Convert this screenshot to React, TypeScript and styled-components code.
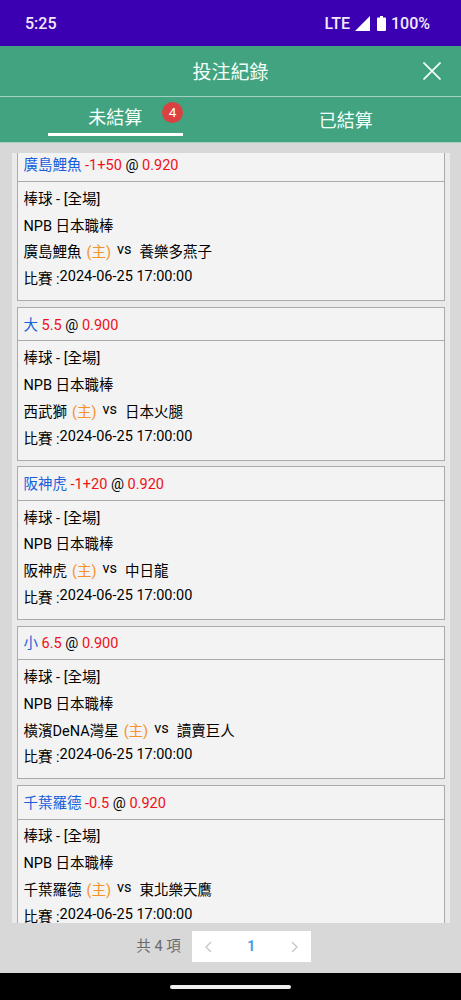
import React from "react";
import styled, { createGlobalStyle } from "styled-components";

const GlobalStyle = createGlobalStyle`
  * { box-sizing: border-box; }
  body {
    margin: 0;
    background: #d8d8d8;
    font-family: Roboto, "Noto Sans CJK TC", sans-serif;
    font-size: 14.5px;
    color: #000;
  }
`;

const Screen = styled.div`
  width: 461px;
  height: 1000px;
  display: flex;
  flex-direction: column;
  overflow: hidden;
  background: #d8d8d8;
`;

const StatusBar = styled.div`
  flex: none;
  height: 46px;
  padding: 1px 31px 0 25px;
  display: flex;
  align-items: center;
  justify-content: space-between;
  background: #3a00b1;
  color: #f3e9ff;
  font-size: 16px;
  font-weight: 500;
`;

const StatusIcons = styled.div`
  display: flex;
  align-items: center;
`;

const SignalIcon = styled.svg`
  margin: 0 7px 0 5px;
`;

const BatteryIcon = styled.svg`
  margin-right: 5px;
`;

const TitleBar = styled.header`
  flex: none;
  height: 51px;
  display: grid;
  grid-template-columns: 60px 1fr 60px;
  align-items: center;
  background: #42a380;
  border-bottom: 1px solid #a3d3c0;
`;

const Title = styled.h1`
  grid-column: 2;
  margin: 0;
  padding-top: 4px;
  text-align: center;
  color: #f4fffa;
  font-size: 19px;
  font-weight: 400;
  line-height: 28px;
`;

const CloseButton = styled.button`
  justify-self: center;
  display: flex;
  padding: 0 0 0 2px;
  border: 0;
  background: none;
`;

const Tabs = styled.nav`
  flex: none;
  height: 46px;
  display: flex;
  background: #42a380;
  border-bottom: 1px solid #a9cfc0;
`;

const Tab = styled.button<{ $active?: boolean }>`
  position: relative;
  flex: 1;
  display: flex;
  justify-content: center;
  padding: ${(p) => (p.$active ? 8 : 11)}px 0 0;
  border: 0;
  background: none;
  color: #f4fffa;
  font: 400 18px/26px Roboto, "Noto Sans CJK TC", sans-serif;
`;

const TabLabel = styled.span<{ $underlined?: boolean }>`
  width: 135px;
  height: 31px;
  text-align: center;
  border-bottom: ${(p) => (p.$underlined ? "3px solid #fff" : "none")};
`;

const Badge = styled.span`
  position: absolute;
  top: 5px;
  left: 162px;
  width: 21px;
  height: 21px;
  border-radius: 50%;
  background: #db4141;
  color: #fff;
  font-size: 13.5px;
  line-height: 21px;
  text-align: center;
`;

const List = styled.main`
  flex: none;
  height: 770px;
  margin: 10px 11px 0 12px;
  padding: 0 5px;
  overflow: hidden;
  background: #eaeaea;
`;

const Stack = styled.div`
  margin-top: -5.4px;
  display: flex;
  flex-direction: column;
  gap: 5.9px;
`;

const Card = styled.article`
  flex: none;
  height: 153.5px;
  border: 1px solid #aaa;
  background: #f3f3f3;
`;

const CardHeader = styled.div`
  height: 33.4px;
  padding: 1.6px 5.5px 0;
  border-bottom: 1px solid #aaa;
  line-height: 32px;
  white-space: pre;
`;

const CardBody = styled.div`
  padding: 3.8px 5.5px 0;
`;

const Line = styled.div`
  height: 26.8px;
  line-height: 27px;
  display: flex;
  white-space: pre;
`;

const Pick = styled.span`
  color: #1660dc;
`;

const Odds = styled.span`
  color: #f01018;
`;

const Home = styled.span`
  margin-left: 5px;
  color: #f5922a;
`;

const Versus = styled.span`
  margin: -3px 8px 0 6px;
`;

const Time = styled.span`
  margin-top: -3px;
`;

const Footer = styled.footer`
  flex: 1;
  display: flex;
  align-items: flex-start;
  justify-content: center;
  padding: 8px 14px 0 0;
  color: #6a6a6a;
  line-height: 31px;
`;

const Pager = styled.div`
  width: 119px;
  height: 31px;
  margin-left: 11px;
  padding: 0 12px;
  display: flex;
  align-items: center;
  justify-content: space-between;
  background: #fff;
`;

const CurrentPage = styled.span`
  color: #4a9be8;
  font-weight: 700;
  font-size: 14px;
`;

const NavigationBar = styled.div`
  flex: none;
  height: 27px;
  display: flex;
  align-items: center;
  justify-content: center;
  background: #000;
`;

const NavigationHandle = styled.div`
  width: 121px;
  height: 4px;
  border-radius: 2px;
  background: #eee;
`;

interface Bet {
  pick: string;
  line: string;
  odds: string;
  home: string;
  away: string;
}

const bets: Bet[] = [
  { pick: "廣島鯉魚", line: "-1+50", odds: "0.920", home: "廣島鯉魚", away: "養樂多燕子" },
  { pick: "大", line: "5.5", odds: "0.900", home: "西武獅", away: "日本火腿" },
  { pick: "阪神虎", line: "-1+20", odds: "0.920", home: "阪神虎", away: "中日龍" },
  { pick: "小", line: "6.5", odds: "0.900", home: "橫濱DeNA灣星", away: "讀賣巨人" },
  { pick: "千葉羅德", line: "-0.5", odds: "0.920", home: "千葉羅德", away: "東北樂天鷹" },
];

const Chevron = ({ d }: { d: string }) => (
  <svg width="8" height="12" viewBox="0 0 8 12" fill="none" stroke="#c4c6cb" strokeWidth="1.4">
    <path d={d} />
  </svg>
);

const BetCard = ({ bet }: { bet: Bet }) => (
  <Card>
    <CardHeader>
      <Pick>{bet.pick}</Pick> <Odds>{bet.line}</Odds> @ <Odds>{bet.odds}</Odds>
    </CardHeader>
    <CardBody>
      <Line>棒球 - [全場]</Line>
      <Line>NPB 日本職棒</Line>
      <Line>
        <span>{bet.home}</span>
        <Home>(主)</Home>
        <Versus>vs</Versus>
        <span>{bet.away}</span>
      </Line>
      <Line>
        <span>比賽 :</span>
        <Time>2024-06-25 17:00:00</Time>
      </Line>
    </CardBody>
  </Card>
);

export default function App() {
  return (
    <Screen>
      <GlobalStyle />
      <StatusBar>
        <span>5:25</span>
        <StatusIcons>
          <span>LTE</span>
          <SignalIcon width="15" height="15" viewBox="0 0 15 15">
            <path d="M15 0v15H0z" fill="#fff" />
          </SignalIcon>
          <BatteryIcon width="9" height="15" viewBox="0 0 9 15">
            <path d="M3 0h3v1.5h2q1 0 1 1V14q0 1-1 1H1q-1 0-1-1V2.500q0-1 1-1h2z" fill="#fff" />
          </BatteryIcon>
          <span>100%</span>
        </StatusIcons>
      </StatusBar>
      <TitleBar>
        <Title>投注紀錄</Title>
        <CloseButton aria-label="關閉">
          <svg width="18" height="18" viewBox="0 0 18 18" stroke="#f4fffa" strokeWidth="1.7">
            <path d="M.5.5l17 17M17.500.5l-17 17" />
          </svg>
        </CloseButton>
      </TitleBar>
      <Tabs>
        <Tab $active>
          <TabLabel $underlined>未結算</TabLabel>
          <Badge>4</Badge>
        </Tab>
        <Tab>
          <TabLabel>已結算</TabLabel>
        </Tab>
      </Tabs>
      <List>
        <Stack>
          {bets.map((bet) => (
            <BetCard key={bet.pick} bet={bet} />
          ))}
        </Stack>
      </List>
      <Footer>
        <span>共 4 項</span>
        <Pager>
          <Chevron d="M7 1L2 6l5 5" />
          <CurrentPage>1</CurrentPage>
          <Chevron d="M1 1l5 5-5 5" />
        </Pager>
      </Footer>
      <NavigationBar>
        <NavigationHandle />
      </NavigationBar>
    </Screen>
  );
}
